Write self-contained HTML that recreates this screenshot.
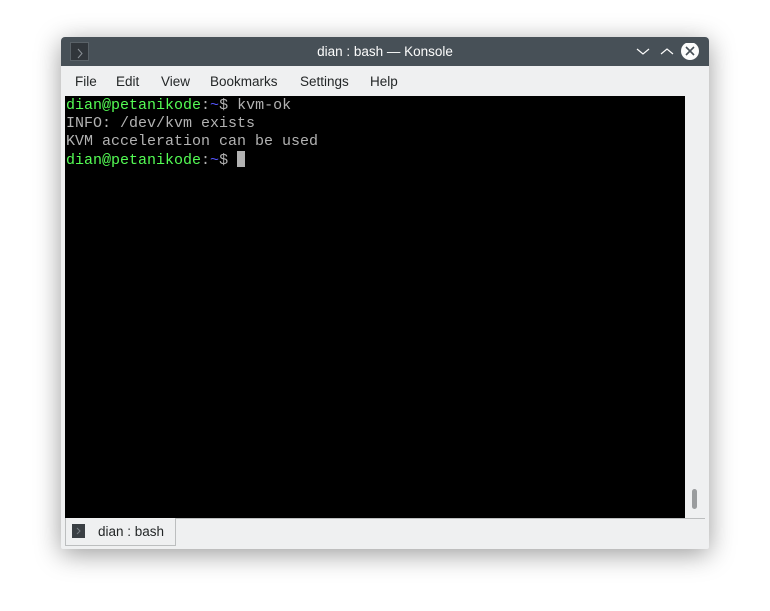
<!DOCTYPE html>
<html><head><style>
body{margin:0;width:770px;height:611px;background:#fff;position:relative;overflow:hidden;font-family:"Liberation Sans",sans-serif}
.win{position:absolute;left:61px;top:37px;width:648px;height:512px;background:#eff0f1;border-radius:4px 4px 2px 2px;box-shadow:0 5px 26px rgba(0,0,0,.4);overflow:hidden}
.title{position:absolute;left:0;top:0;width:648px;height:29px;background:#475057;color:#fcfcfc;font-size:13.5px;text-align:center;line-height:29px}
.ico{position:absolute;left:9px;top:5px;width:17px;height:17px;background:#31363b;border:1px solid #5a6268}
.menu{position:absolute;top:30px;left:0;height:30px;font-size:13.5px;color:#232627;line-height:30px}
.menu span{position:absolute;white-space:nowrap}
.term{position:absolute;left:4px;top:59px;width:620px;height:422px;background:#000;font-family:"Liberation Mono",monospace;font-size:15px;line-height:18px;color:#b2b2b2;padding-top:1px;box-sizing:border-box}
.term div{height:18px;padding-left:1px;white-space:pre}
.g{color:#54fc54}.b{color:#5454fc}
.cur{display:inline-block;width:8px;height:16px;background:#b2b2b2;vertical-align:-3px}
.sb{position:absolute;left:624px;top:59px;width:20px;height:422px;background:#eff0f1}
.thumb{position:absolute;left:7px;top:393px;width:5px;height:20px;background:#9a9c9e;border-radius:3px}
.tabline{position:absolute;left:4px;top:481px;width:640px;height:1px;background:#bcbebf}
.tab{position:absolute;left:4px;top:481px;width:109px;height:27px;border:1px solid #bcbebf;border-top:none;background:#eff0f1;font-size:13.5px;color:#232627;line-height:28px}
.tab i{position:absolute;left:6px;top:6px;width:13px;height:14px;background:#3a3f44}
</style></head><body>
<div class="win">
<div class="title"><div class="ico"><svg width="17" height="17"><path d="M7 4l4 4.5-4 4.5" stroke="#8a9096" fill="none"/></svg></div>dian : bash — Konsole
<svg style="position:absolute;left:570px;top:6px" width="70" height="18"><path d="M6 6l6 5 6-5" stroke="#fcfcfc" fill="none" stroke-width="1.2"/><path d="M30 11l6-5 6 5" stroke="#fcfcfc" fill="none" stroke-width="1.2"/><circle cx="59" cy="8" r="9" fill="#fcfcfc"/><path d="M55 4l8 8M63 4l-8 8" stroke="#475057" stroke-width="1.6"/></svg></div>
<div class="menu"><span style="left:14px">File</span><span style="left:55px">Edit</span><span style="left:100px">View</span><span style="left:149px">Bookmarks</span><span style="left:239px">Settings</span><span style="left:309px">Help</span></div>
<div class="term">
<div><span class="g">dian@petanikode</span>:<span class="b">~</span>$ kvm-ok</div>
<div>INFO: /dev/kvm exists</div>
<div>KVM acceleration can be used</div>
<div><span class="g">dian@petanikode</span>:<span class="b">~</span>$ <span class="cur"></span></div>
</div>
<div class="sb"><div class="thumb"></div></div>
<div class="tabline"></div>
<div class="tab"><i><svg width="13" height="14" style="display:block"><path d="M5 4l3 3-3 3" stroke="#7a8086" fill="none"/></svg></i><span style="position:absolute;left:32px">dian : bash</span></div>
</div>
</body></html>
